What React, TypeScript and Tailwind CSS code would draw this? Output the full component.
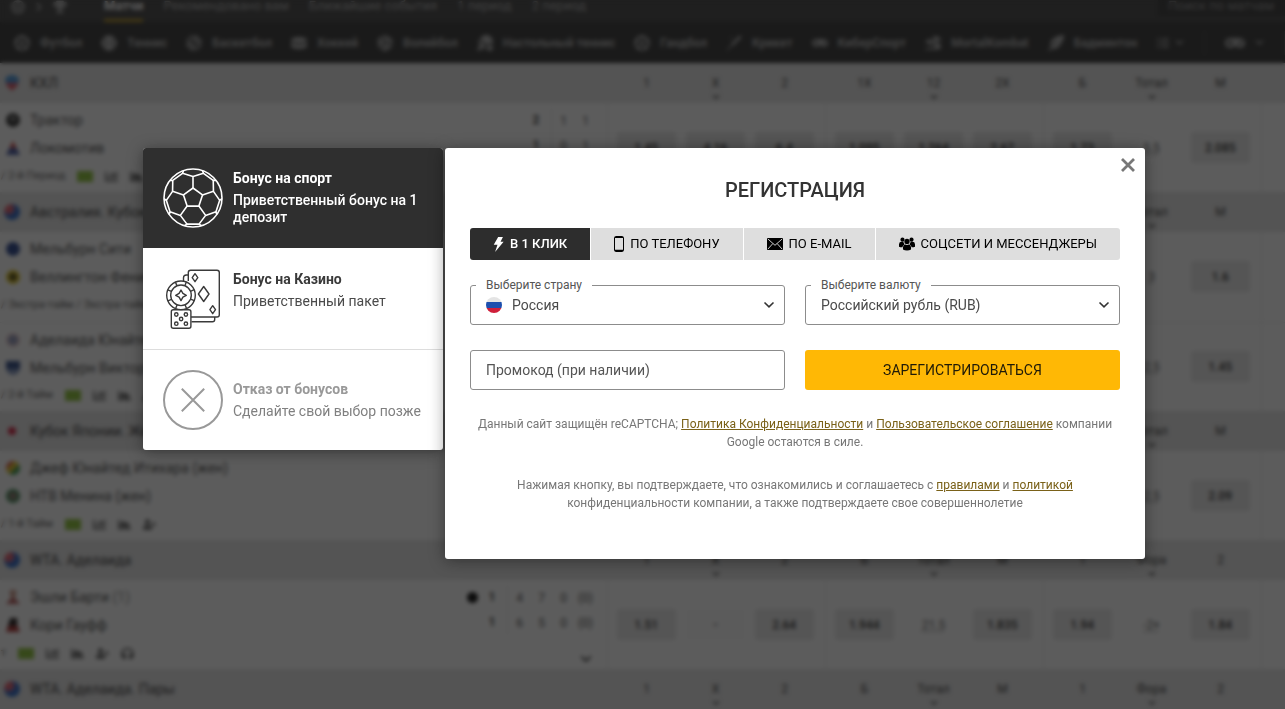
import React from "react";
import {
  FaChartBar,
  FaChevronDown,
  FaChevronRight,
  FaFutbol,
  FaGamepad,
  FaBasketballBall,
  FaVolleyballBall,
  FaTableTennis,
  FaListUl,
  FaHeadphones,
  FaTrophy,
  FaFeatherAlt,
  FaHockeyPuck,
  FaBaseballBall,
  FaChartArea,
  FaUserPlus,
  FaDragon,
} from "react-icons/fa";
import { GiCricketBat } from "react-icons/gi";

type Heading = { label: string; more?: boolean };

type Match = {
  teams: { name: string; logo: string; note?: string }[];
  status: string;
  stats: number;
  serve?: boolean;
  sets?: string[][];
  odds: string[];
};

type League = { name: string; flag: string; headings: Heading[]; matches: Match[] };

const sports = [
  { name: "Футбол", Icon: FaFutbol },
  { name: "Теннис", Icon: FaBaseballBall },
  { name: "Баскетбол", Icon: FaBasketballBall },
  { name: "Хоккей", Icon: FaHockeyPuck },
  { name: "Волейбол", Icon: FaVolleyballBall },
  { name: "Настольный теннис", Icon: FaTableTennis },
  { name: "Гандбол", Icon: FaFutbol },
  { name: "Крикет", Icon: GiCricketBat },
  { name: "КиберСпорт", Icon: FaGamepad },
  { name: "MortalKombat", Icon: FaDragon },
  { name: "Бадминтон", Icon: FaFeatherAlt },
];

const resultHeadings: Heading[] = [
  { label: "1" },
  { label: "X", more: true },
  { label: "2" },
  { label: "1X" },
  { label: "12", more: true },
  { label: "2X" },
  { label: "Б" },
  { label: "Тотал", more: true },
  { label: "М" },
];

const totalHeadings: Heading[] = [
  { label: "" },
  { label: "" },
  { label: "" },
  { label: "" },
  { label: "" },
  { label: "" },
  { label: "" },
  { label: "Тотал", more: true },
  { label: "М" },
];

const tennisHeadings: Heading[] = [
  { label: "1" },
  { label: "X", more: true },
  { label: "2" },
  { label: "Б" },
  { label: "Тотал", more: true },
  { label: "М" },
  { label: "1" },
  { label: "Фора", more: true },
  { label: "2" },
];

const australia = "bg-[radial-gradient(circle_at_30%_30%,#e25563_22%,#1d5fc4_45%)]";

const leagues: League[] = [
  {
    name: "КХЛ",
    flag: "bg-[linear-gradient(#3f8fd8_50%,#d84a5c_50%)] [clip-path:polygon(0_0,100%_0,85%_65%,50%_100%,15%_65%)]",
    headings: resultHeadings,
    matches: [
      {
        teams: [
          { name: "Трактор", logo: "bg-[radial-gradient(circle_at_50%_40%,#777777_15%,#222222_40%)] rounded-full" },
          { name: "Локомотив", logo: "bg-[linear-gradient(#c8322e_50%,#3c4f9a_50%)] [clip-path:polygon(50%_0,100%_100%,0_100%)]" },
        ],
        status: "/ 2-й Период",
        stats: 3,
        sets: [
          ["2", "1", "1"],
          ["1", "0", "1"],
        ],
        odds: ["1.45", "4.16", "6.4", "1.095", "1.264", "2.67", "1.73", "~5.5", "2.085"],
      },
    ],
  },
  {
    name: "Австралия. Кубок",
    flag: australia,
    headings: totalHeadings,
    matches: [
      {
        teams: [
          { name: "Мельбурн Сити", logo: "bg-[#1d3a86] rounded-full" },
          { name: "Веллингтон Феникс", logo: "bg-[radial-gradient(circle,#4a4210_30%,#e3c512_50%)] rounded-full" },
        ],
        status: "/ Экстра-тайм / Экстра-тайм",
        stats: 0,
        odds: ["", "", "", "", "", "", "", "~3", "1.6"],
      },
      {
        teams: [
          { name: "Аделаида Юнайтед", logo: "bg-[radial-gradient(circle,#8b95b8_40%,#e8c8c8_60%)] rounded-full" },
          { name: "Мельбурн Виктори", logo: "bg-[linear-gradient(#25417f_60%,#7c90bb_60%)] rounded-b-full" },
        ],
        status: "/ 2-й Тайм",
        stats: 3,
        odds: ["", "", "", "", "", "", "", "~2.5", "1.45"],
      },
    ],
  },
  {
    name: "Кубок Японии. Жен",
    flag: "bg-[radial-gradient(circle,#d01838_35%,#e5e5e5_40%)]",
    headings: totalHeadings,
    matches: [
      {
        teams: [
          { name: "Джеф Юнайтед Итихара (жен)", logo: "bg-[linear-gradient(135deg,#d8402c_30%,#e0c020_30%,#e0c020_60%,#2c9040_60%)] rounded-full" },
          { name: "НТВ Менина (жен)", logo: "bg-[radial-gradient(circle,#8f6f6a_25%,#2f8048_55%)] rounded-full" },
        ],
        status: "/ 1-й Тайм",
        stats: 3,
        odds: ["", "", "", "", "", "", "", "~2.5", "2.09"],
      },
    ],
  },
  {
    name: "WTA. Аделаида",
    flag: australia,
    headings: tennisHeadings,
    matches: [
      {
        teams: [
          { name: "Эшли Барти", note: "(1)", logo: "bg-[linear-gradient(#c99080_60%,#b05050_60%)] [clip-path:polygon(25%_0,75%_0,65%_60%,100%_100%,0_100%,35%_60%)]" },
          { name: "Кори Гауфф", logo: "bg-[linear-gradient(#1d1414_60%,#a82828_60%)] [clip-path:polygon(30%_0,80%_0,80%_50%,100%_100%,0_100%)]" },
        ],
        status: "т",
        stats: 4,
        serve: true,
        sets: [
          ["1", "4", "7", "0", "(0)"],
          ["1", "6", "5", "0", "(0)"],
        ],
        odds: ["1.51", "-", "2.64", "1.944", "~21.5", "1.835", "1.94", "~-2+", "1.84"],
      },
    ],
  },
  { name: "WTA. Аделаида. Пары", flag: australia, headings: tennisHeadings, matches: [] },
];

const cellPadding = ["border-l border-[#ebebeb] pl-[9px] pr-[5px]", "px-[5px]", "pl-[5px] pr-[11px]"];

const headingPadding = ["pl-[10px] pr-[5px]", "px-[5px]", "pl-[5px] pr-[11px]"];

const statIcons = [FaChartBar, FaChartArea, FaUserPlus, FaHeadphones];

function Odd({ value }: { value: string }) {
  if (value.startsWith("~")) {
    return (
      <div className="text-center text-xs text-[#555555] underline decoration-dotted underline-offset-2">
        {value.slice(1)}
      </div>
    );
  }
  return (
    <button
      type="button"
      className={`block h-[31px] w-full rounded-xs text-xs font-medium text-[#222222] ${
        value === "-" ? "bg-[#fbfbfb]" : "bg-[#e8e8e8]"
      }`}
    >
      {value}
    </button>
  );
}

function MatchRow({ match }: { match: Match }) {
  return (
    <tr className="h-[90px] border-b border-[#ebebeb] bg-white last:h-[89px] last:border-b-0">
      <td className="p-0 align-top">
        <div className="flex justify-between pt-[3px] pr-[10px]">
          <div className="min-w-0">
            {match.teams.map((team) => (
              <div key={team.name} className="flex h-7 items-center gap-[10px] pl-[6px] text-sm text-[#444444]">
                <span className={`size-[14px] shrink-0 ${team.logo}`} />
                <span className="whitespace-nowrap">
                  {team.name} {team.note && <span className="text-[#888888]">{team.note}</span>}
                </span>
              </div>
            ))}
            <div className="flex h-7 items-center gap-3 pl-px text-[11px] text-[#555555]">
              <span className="whitespace-nowrap">{match.status}</span>
              {match.stats > 0 && <span className="h-[11px] w-4 bg-[#86bf2c]" />}
              {statIcons.slice(0, match.stats).map((Icon, i) => (
                <Icon key={i} className="size-[13px] text-[#555555]" />
              ))}
            </div>
          </div>
          {match.sets && (
            <div className="flex flex-col items-end pt-[2px] text-xs text-[#444444]">
              {match.sets.map((row, r) => (
                <div key={r} className="flex h-[25px] items-center">
                  {match.serve && r === 0 && <span className="size-[11px] rounded-full bg-black" />}
                  {row.map((score, i) => (
                    <span
                      key={i}
                      className={
                        i === 0
                          ? "mr-px w-[30px] border-r border-[#e4e4e4] text-center leading-[25px] font-bold text-[#333333]"
                          : "w-[22px] text-center"
                      }
                    >
                      {score}
                    </span>
                  ))}
                </div>
              ))}
              <FaChevronDown className="mt-[18px] mr-[5px] size-3 text-[#333333]" />
            </div>
          )}
        </div>
      </td>
      {match.odds.map((value, i) => (
        <td key={i} className={`align-middle ${cellPadding[i % 3]}`}>
          <Odd value={value} />
        </td>
      ))}
      <td className="border-l border-[#ebebeb]" />
    </tr>
  );
}

function LeagueRows({ league }: { league: League }) {
  return (
    <tbody>
      <tr className="h-10 bg-[#e4e4e4] text-xs text-[#333333]">
        <th scope="rowgroup" className="p-0 text-left font-normal">
          <div className="flex items-center gap-[10px] pl-1 text-sm">
            <span className={`size-4 shrink-0 rounded-full ${league.flag}`} />
            {league.name}
          </div>
        </th>
        {league.headings.map((heading, i) => (
          <th key={i} scope="col" className={`align-top font-normal ${headingPadding[i % 3]}`}>
            <div className="flex flex-col items-center pt-3">
              <span className="leading-4">{heading.label}</span>
              {heading.more && <FaChevronDown className="mt-[2px] size-2" />}
            </div>
          </th>
        ))}
        <th />
      </tr>
      {league.matches.map((match) => (
        <MatchRow key={match.teams[0].name} match={match} />
      ))}
    </tbody>
  );
}

function BettingPage() {
  return (
    <div className="bg-white">
      <header className="bg-[#3a3a3a]">
        <div className="flex h-[22px] items-start gap-5 text-[13px] leading-[11px] text-[#a8a8a8]">
          <div className="flex w-[84px] shrink-0 items-center gap-[9px] pl-[11px]">
            <FaFutbol className="size-[14px]" />
            <FaChevronRight className="size-[10px]" />
            <FaTrophy className="size-[14px]" />
          </div>
          <a href="#matches" className="flex h-full flex-col justify-between font-bold text-white">
            Матчи
            <span className="h-[3px] bg-[#b89018]" />
          </a>
          <a href="#recommended">Рекомендовано вам</a>
          <a href="#upcoming">Ближайшие события</a>
          <a href="#first">1 период</a>
          <a href="#second">2 период</a>
          <input
            aria-label="Поиск по матчам"
            placeholder="Поиск по матчам"
            className="ml-auto h-4 w-[127px] bg-[#2d2d2d] pb-[5px] pl-[10px] text-[13px] text-white placeholder:text-[#8a8a8a]"
          />
        </div>
        <nav className="flex h-[41px] items-center bg-[#2b2b2b] pl-[14px] text-xs font-bold text-[#a8a8a8]">
          <div className="flex gap-[19px]">
            {sports.map(({ name, Icon }) => (
              <a key={name} href="#sport" className="flex items-center gap-[10px] whitespace-nowrap">
                <Icon className="size-4" />
                {name}
              </a>
            ))}
          </div>
          <button type="button" aria-label="Все виды спорта" className="ml-5 flex items-center gap-[6px]">
            <FaListUl className="size-3" />
            <FaChevronDown className="size-[9px]" />
          </button>
          <button type="button" aria-label="Игры" className="ml-auto flex h-6 items-center gap-[10px] border-x border-[#444444] pr-5 pl-5">
            <FaGamepad className="size-5" />
            <FaChevronDown className="size-[9px]" />
          </button>
        </nav>
      </header>
      <table className="w-full table-fixed border-collapse">
        <colgroup>
          <col />
          {[0, 1, 2].map((group) => (
            <React.Fragment key={group}>
              <col className="w-[74px]" />
              <col className="w-[69px]" />
              <col className="w-[75px]" />
            </React.Fragment>
          ))}
          <col className="w-6" />
        </colgroup>
        {leagues.map((league) => (
          <LeagueRows key={league.name} league={league} />
        ))}
      </table>
    </div>
  );
}

function SoccerIcon() {
  const point = (radius: number, degrees: number) => {
    const angle = (degrees * Math.PI) / 180;
    return `${(30 + radius * Math.cos(angle)).toFixed(2)} ${(30 + radius * Math.sin(angle)).toFixed(2)}`;
  };
  const spokes = [0, 1, 2, 3, 4].map((i) => -90 + i * 72);
  return (
    <svg viewBox="0 0 60 60" className="size-[60px] shrink-0" fill="none" stroke="currentColor" strokeWidth="1.6" strokeLinejoin="round">
      <circle cx="30" cy="30" r="29" />
      <path d={`M${spokes.map((a) => point(10, a)).join("L")}Z`} />
      {spokes.map((a) => (
        <path
          key={a}
          d={`M${point(10, a)}L${point(21.5, a)}M${point(29, a - 19)}L${point(26.8, a - 23)}L${point(21.5, a)}L${point(26.8, a + 23)}L${point(29, a + 19)}M${point(26.8, a + 23)}L${point(26.8, a + 49)}`}
        />
      ))}
    </svg>
  );
}

function CasinoIcon() {
  const chipMarks = [0, 45, 90, 135, 180, 225, 270, 315];
  return (
    <svg viewBox="0 0 60 60" className="size-[60px] shrink-0" fill="none" stroke="currentColor" strokeWidth="1.4" strokeLinejoin="round">
      <path d="M25.3 12V3.6q0-2.3 2.3-2.3H54q2.3 0 2.3 2.3v42.1q0 2.3-2.3 2.3H28" />
      <path d="M25.3 6h-2q-2.8 0-2.8 2.8V12M28.500 52.700H49.400q2.300 0 2.300-2.300V48" />
      <path d="M32 4.700l2.800 4-2.800 4-2.800-4zM40.700 17.500l5.300 7.500-5.300 7.500-5.300-7.500zM49.700 36.700l2.800 4-2.800 4-2.800-4z" />
      <circle cx="18" cy="26.300" r="14.300" />
      <circle cx="18" cy="26.300" r="10.300" />
      {chipMarks.map((a) => (
        <path key={a} d="M18 12v4" transform={`rotate(${a + 22} 18 26.300)`} />
      ))}
      <path d="M18 21l1.900 3.400 3.400 1.900-3.400 1.900L18 31.600l-1.900-3.400-3.400-1.900 3.400-1.900z" />
      <rect x="8.300" y="40.700" width="19.600" height="18.600" rx="2" />
      <circle cx="13.300" cy="45.500" r="1.700" />
      <circle cx="22.900" cy="45.500" r="1.700" />
      <circle cx="18.100" cy="50" r="1.700" />
      <circle cx="13.300" cy="54.700" r="1.700" />
      <circle cx="22.900" cy="54.700" r="1.700" />
    </svg>
  );
}

function DeclineIcon() {
  return (
    <svg viewBox="0 0 60 60" className="size-[60px] shrink-0" fill="none" stroke="currentColor" strokeWidth="2">
      <circle cx="30" cy="30" r="29" />
      <path d="M18.800 18.800l22.400 22.400M41.200 18.800L18.800 41.200" />
    </svg>
  );
}

function BonusPicker() {
  const row = "flex w-full items-center gap-[10px] pl-5 pr-2 text-left text-sm leading-[17px]";
  return (
    <aside className="w-[300px] shrink-0 self-start overflow-hidden rounded-[3px] bg-white shadow-[0_2px_16px_rgba(0,0,0,0.4)]">
      <button type="button" className={`${row} h-[100px] bg-[#2f2f2f] font-medium text-white`}>
        <SoccerIcon />
        <span>
          <span className="mb-[5px] block font-bold">Бонус на спорт</span>
          <span className="block">Приветственный бонус на 1 депозит</span>
        </span>
      </button>
      <button type="button" className={`${row} h-[102px] border-b border-[#dddddd] text-[#3a3a3a]`}>
        <CasinoIcon />
        <span>
          <span className="mb-[5px] block font-bold">Бонус на Казино</span>
          <span className="block min-h-[34px] text-[#4a4a4a]">Приветственный пакет</span>
        </span>
      </button>
      <button type="button" className={`${row} h-[100px] text-[#999999]`}>
        <DeclineIcon />
        <span>
          <span className="mb-[5px] block font-bold">Отказ от бонусов</span>
          <span className="block text-[#808080]">Сделайте свой выбор позже</span>
        </span>
      </button>
    </aside>
  );
}

function BoltIcon() {
  return (
    <svg viewBox="0 0 30 44" className="h-[15px] w-[11px]" fill="currentColor">
      <path d="M14 0h14l-7 14h9L5 44l7-21H1z" />
    </svg>
  );
}

function PhoneIcon() {
  return (
    <svg viewBox="0 0 10 16" className="h-4 w-[10px]" fill="none" stroke="currentColor">
      <rect x=".500" y=".500" width="9" height="15" rx="1.200" />
      <path d="M1 1.500h8M1 14.300h8" strokeWidth="1.200" />
    </svg>
  );
}

function MailIcon() {
  return (
    <svg viewBox="0 0 16 12" className="h-3 w-4">
      <rect width="16" height="12" rx=".6" fill="currentColor" />
      <path d="M.800.900L8 7.300 15.200.900M.800 11.200L5.800 5.600M15.200 11.200L10.200 5.600" fill="none" stroke="#dedede" strokeWidth=".9" />
    </svg>
  );
}

function PeopleIcon() {
  return (
    <svg viewBox="0 0 17 14" className="h-[14px] w-4" fill="currentColor">
      <circle cx="3.700" cy="2.400" r="2.200" />
      <circle cx="13.300" cy="2.400" r="2.200" />
      <path d="M0 9.800V7.500Q0 5 2.200 4.600h2.300q.700 2 1.500 2.600Q4 8 3.600 10.400 1.200 10.400 0 9.800zM17 9.800V7.500Q17 5 14.800 4.600h-2.300q-.7 2-1.500 2.600 2 .8 2.400 3.200 2.400 0 3.600-.6z" />
      <circle cx="8.500" cy="4.300" r="2.800" />
      <path d="M4.200 12.900v-2.200q0-2.800 2.600-3.100.8.500 1.700.5t1.700-.5q2.600.3 2.600 3.100v2.200Q11 14 8.500 14t-4.300-1.100z" />
    </svg>
  );
}

const methods = [
  { label: "В 1 КЛИК", Icon: BoltIcon },
  { label: "ПО ТЕЛЕФОНУ", Icon: PhoneIcon },
  { label: "ПО E-MAIL", Icon: MailIcon },
  { label: "СОЦСЕТИ И МЕССЕНДЖЕРЫ", Icon: PeopleIcon },
];

function SelectField({ id, label, value, flag }: { id: string; label: string; value: string; flag?: boolean }) {
  return (
    <div className="relative">
      <label htmlFor={id} className="absolute -top-2 left-[6px] bg-white px-[10px] text-xs leading-4 text-[#555555]">
        {label}
      </label>
      <select
        id={id}
        className={`h-10 w-full appearance-none rounded-[3px] border border-[#8c8c8c] bg-transparent text-sm text-[#4a4a4a] ${
          flag ? "pl-[41px]" : "pl-[15px]"
        }`}
      >
        <option>{value}</option>
      </select>
      {flag && (
        <span className="pointer-events-none absolute top-3 left-4 size-4 rounded-full bg-[linear-gradient(#e4e4e4_34%,#1d4fae_34%,#1d4fae_67%,#cf1f3a_67%)]" />
      )}
      <svg viewBox="0 0 12 8" className="pointer-events-none absolute top-4 right-[10px] h-2 w-3" fill="none" stroke="#333333" strokeWidth="1.600">
        <path d="M1.500 1.500L6 5.800l4.500-4.300" />
      </svg>
    </div>
  );
}

function Registration() {
  const link = "text-[#7a6118] underline";
  return (
    <section aria-labelledby="registration-title" className="relative min-w-0 flex-1 rounded-[3px] bg-white px-[25px] pt-[30px] pb-[47px] shadow-[0_2px_16px_rgba(0,0,0,0.4)]">
      <button type="button" aria-label="Закрыть" className="absolute top-[10px] right-[10px] text-[#777777]">
        <svg viewBox="0 0 14 14" className="size-[14px]" fill="none" stroke="currentColor" strokeWidth="2.800">
          <path d="M1 1l12 12M13 1L1 13" />
        </svg>
      </button>
      <h1 id="registration-title" className="text-center text-xl leading-6 font-medium text-[#333333]">
        РЕГИСТРАЦИЯ
      </h1>
      <div className="mt-[26px] flex gap-px overflow-hidden rounded-[3px] text-[13px]">
        {methods.map(({ label, Icon }, i) => (
          <button
            key={label}
            type="button"
            className={`flex h-8 flex-auto items-center justify-center gap-[6px] whitespace-nowrap ${
              i === 0 ? "bg-[#2d2d2d] font-medium text-white" : "bg-[#dedede] text-black"
            }`}
          >
            <Icon />
            {label}
          </button>
        ))}
      </div>
      <form className="mt-[25px] grid grid-cols-2 gap-x-5 gap-y-[25px]" onSubmit={(event) => event.preventDefault()}>
        <SelectField id="country" label="Выберите страну" value="Россия" flag />
        <SelectField id="currency" label="Выберите валюту" value="Российский рубль (RUB)" />
        <input
          aria-label="Промокод (при наличии)"
          placeholder="Промокод (при наличии)"
          className="h-10 w-full rounded-[3px] border border-[#8c8c8c] px-[15px] text-sm placeholder:text-[#555555]"
        />
        <button type="submit" className="h-10 rounded-[3px] bg-[#ffb805] text-sm text-[#1f1a08]">
          ЗАРЕГИСТРИРОВАТЬСЯ
        </button>
      </form>
      <p className="mt-[25px] text-center text-xs leading-[18px] text-[#777777]">
        Данный сайт защищён reCAPTCHA;{" "}
        <a href="#privacy" className={link}>
          Политика Конфиденциальности
        </a>{" "}
        и{" "}
        <a href="#terms" className={link}>
          Пользовательское соглашение
        </a>{" "}
        компании Google остаются в силе.
      </p>
      <p className="mt-[25px] text-center text-xs leading-[18px] text-[#777777]">
        Нажимая кнопку, вы подтверждаете, что ознакомились и соглашаетесь с{" "}
        <a href="#rules" className={link}>
          правилами
        </a>{" "}
        и{" "}
        <a href="#policy" className={link}>
          политикой
        </a>{" "}
        конфиденциальности компании, а также подтверждаете свое совершеннолетие
      </p>
    </section>
  );
}

export default function App() {
  return (
    <div className="relative min-h-screen overflow-hidden bg-white font-['Roboto',sans-serif]">
      <BettingPage />
      <div className="absolute inset-0 flex items-start justify-center bg-[#131313]/69 pt-[148px] pl-[3px] backdrop-blur-[2px]">
        <div role="dialog" aria-modal="true" className="flex w-full max-w-[1002px] gap-[2px]">
          <BonusPicker />
          <Registration />
        </div>
      </div>
    </div>
  );
}
